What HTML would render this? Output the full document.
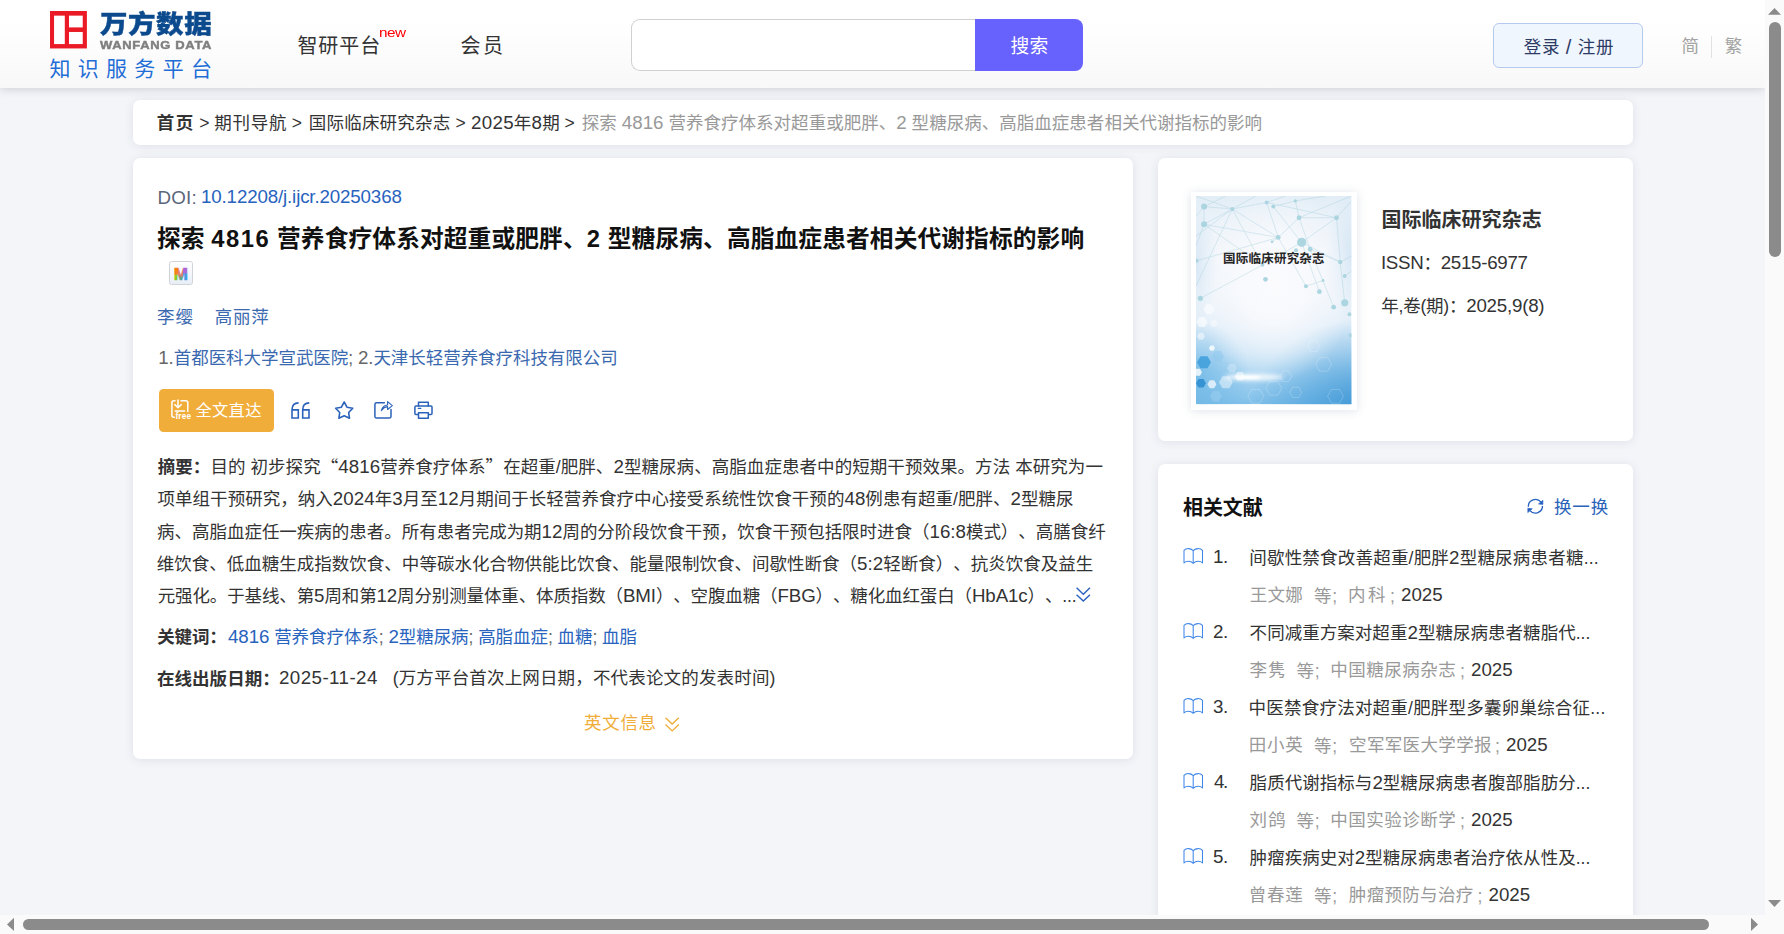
<!DOCTYPE html>
<html lang="zh-CN">
<head>
<meta charset="utf-8">
<title>探索 4816 营养食疗体系对超重或肥胖、2 型糖尿病、高脂血症患者相关代谢指标的影响 - 万方数据知识服务平台</title>
<style>
html,body{margin:0;padding:0}
body{width:1784px;height:934px;overflow:hidden;position:relative;background:#f3f5f9;font-family:"Liberation Sans","Noto Sans CJK SC",sans-serif}
.abs{position:absolute}
.t{position:absolute;white-space:nowrap;line-height:30px;height:30px}
.t b{font-weight:700}
.t{text-spacing-trim:space-all}
.q{font-family:"Noto Sans CJK SC",sans-serif}
.l{font-size:1.07em}
.card{position:absolute;background:#fff;border-radius:7px;box-shadow:0 1px 10px rgba(50,58,80,.105)}
#header{left:0;top:0;width:1765px;height:88px;background:linear-gradient(#fff,#fefefe 35%,#f8f8f8);box-shadow:0 1px 9px rgba(40,46,66,.20)}
svg{position:absolute;overflow:visible}
</style>
</head>
<body>
<div id="page" class="abs" style="left:0;top:0;width:1765px;height:915px;overflow:hidden">

<!-- cards -->
<div class="card" style="left:133px;top:100px;width:1500px;height:45px"></div>
<div class="card" style="left:133px;top:158px;width:1000px;height:601px"></div>
<div class="card" style="left:1158px;top:158px;width:475px;height:283px"></div>
<div class="card" style="left:1158px;top:464px;width:475px;height:520px"></div>

<!-- header -->
<div id="header" class="abs"></div>
<svg style="left:50.1px;top:11.3px" width="36.9" height="37.45" viewBox="0 0 36.9 37.45">
  <rect x="0" y="0" width="36.9" height="37.45" fill="#ea1b26"/>
  <rect x="4.05" y="4.64" width="10.75" height="28.44" fill="#fff"/>
  <rect x="19" y="4.64" width="13.75" height="11.76" fill="#fff"/>
  <rect x="19" y="20.98" width="13.75" height="12.1" fill="#fff"/>
</svg>
<div class="abs" style="left:631px;top:19px;width:345px;height:51.5px;box-sizing:border-box;border:1.2px solid #d0d0d0;border-right:none;border-radius:9px 0 0 9px;background:#fff"></div>
<div class="abs" style="left:975px;top:19px;width:108px;height:51.5px;border-radius:0 8px 8px 0;background:#6761fe"></div>
<div class="abs" style="left:1493px;top:23px;width:150px;height:45px;box-sizing:border-box;border:1.2px solid #b4caee;border-radius:6px;background:#f0f6fe"></div>
<div class="abs" style="left:1711px;top:36px;width:1px;height:21.5px;background:#e2e2e2"></div>

<!-- M badge -->
<div class="abs" style="left:169.2px;top:261.2px;width:23.6px;height:23.6px;box-sizing:border-box;border:1.7px solid #d0d3d8;border-radius:2.5px;background:linear-gradient(#fff,#e9eef7)"></div>
<svg style="left:169px;top:261px" width="24" height="24" viewBox="0 0 24 24">
  <defs>
    <linearGradient id="mg1" x1="0" y1="0" x2="0" y2="1"><stop offset="0" stop-color="#fa7a0a"/><stop offset=".5" stop-color="#f0801a"/><stop offset=".55" stop-color="#8ccc20"/><stop offset="1" stop-color="#86c428"/></linearGradient>
    <linearGradient id="mg2" x1="0" y1="0" x2="0" y2="1"><stop offset="0" stop-color="#ee6a50"/><stop offset=".55" stop-color="#d8786a"/><stop offset=".7" stop-color="#58a890"/><stop offset="1" stop-color="#4ea296"/></linearGradient>
    <linearGradient id="mg3" x1="0" y1="0" x2="0" y2="1"><stop offset="0" stop-color="#b45cd8"/><stop offset=".4" stop-color="#a868d8"/><stop offset=".5" stop-color="#4a94e4"/><stop offset="1" stop-color="#3aa0ea"/></linearGradient>
    <clipPath id="mc1"><rect x="0" y="0" width="9.2" height="24"/></clipPath>
    <clipPath id="mc2"><rect x="9.2" y="0" width="4.8" height="24"/></clipPath>
    <clipPath id="mc3"><rect x="14" y="0" width="10" height="24"/></clipPath>
  </defs>
  <g font-family="Liberation Sans, sans-serif" font-weight="700" font-size="17" text-anchor="middle">
    <text x="11.8" y="18.8" fill="url(#mg1)" stroke="url(#mg1)" stroke-width=".7" clip-path="url(#mc1)">M</text>
    <text x="11.8" y="18.8" fill="url(#mg2)" stroke="url(#mg2)" stroke-width=".7" clip-path="url(#mc2)">M</text>
    <text x="11.8" y="18.8" fill="url(#mg3)" stroke="url(#mg3)" stroke-width=".7" clip-path="url(#mc3)">M</text>
  </g>
</svg>

<!-- full text button -->
<div class="abs" style="left:159px;top:389px;width:115px;height:43px;border-radius:4.5px;background:#f1ad3a"></div>
<svg style="left:160px;top:392px" width="44" height="36" viewBox="160 392 44 36" fill="none" stroke="#fff" stroke-width="1.5" stroke-linecap="round" stroke-linejoin="round">
  <path d="M175,400.8 H173.9 Q171.9,400.8 171.9,402.8 V415.2 Q171.9,417.2 173.9,417.2 H174.4"/>
  <path d="M181,400.8 H185.8 Q187.8,400.8 187.8,402.8 V411.6"/>
  <path d="M178,399.9 V407.4 M174.8,404.6 L178,407.7 L181.2,404.6"/>
  <path d="M175.2,410.9 H184.6"/>
  <text x="175.4" y="419" font-family="Liberation Sans, sans-serif" font-weight="700" font-size="8.3" fill="#fff" stroke="none" letter-spacing="0.2">free</text>
</svg>

<!-- action icons -->
<svg style="left:284px;top:394px" width="160" height="32" viewBox="284 394 160 32" fill="none" stroke="#2a62ba" stroke-width="1.6" stroke-linejoin="round" stroke-linecap="round">
  <!-- quote 66 -->
  <path d="M298.6,402.9 C294,403 292,405.2 292,409.8 V418 H298.3 V409.9 H292" stroke-linecap="butt" stroke-linejoin="miter"/>
  <path d="M309.3,402.9 C304.7,403 302.7,405.2 302.7,409.8 V418 H309 V409.9 H302.7" stroke-linecap="butt" stroke-linejoin="miter"/>
  <!-- star -->
  <path d="M344.20,402.00 L346.96,407.20 L352.76,408.22 L348.67,412.45 L349.49,418.28 L344.20,415.70 L338.91,418.28 L339.73,412.45 L335.64,408.22 L341.44,407.20 Z"/>
  <!-- share -->
  <path d="M384.4,402.7 H376.6 Q374.9,402.7 374.9,404.4 V416.4 Q374.9,418.1 376.6,418.1 H389.3 Q391,418.1 391,416.4 V409.6" stroke-width="1.5"/>
  <path d="M381.3,410.6 C382.2,407.3 384.2,405.3 387.6,405 V401.6 L392.3,405.6 L387.6,409.5 V406.6 C385,406.8 383,408.2 381.3,410.6 Z" stroke-width="1.1"/>
  <!-- printer -->
  <rect x="414.9" y="406" width="17.1" height="8.6" rx="1" stroke-width="1.5"/>
  <path d="M418.5,406 V402.2 H428.3 V406" stroke-width="1.5"/>
  <rect x="418.5" y="412.8" width="9.8" height="5.4" fill="#fff" stroke-width="1.5"/>
  <path d="M418.3,408.4 H420.8" stroke-width="1.2"/>
</svg>

<!-- abstract chevrons -->
<svg style="left:1070px;top:582px" width="30" height="26" viewBox="1070 582 30 26" fill="none" stroke="#2a62c0" stroke-width="1.4">
  <path d="M1076.6,587.8 L1083.3,594.2 L1090,587.8 M1076.6,594.7 L1083.3,601.1 L1090,594.7"/>
</svg>
<!-- english info chevrons -->
<svg style="left:660px;top:708px" width="30" height="26" viewBox="660 708 30 26" fill="none" stroke="#f0ad3a" stroke-width="1.4">
  <path d="M665.5,717.7 L672.15,724 L678.8,717.7 M665.5,724.6 L672.15,730.9 L678.8,724.6"/>
</svg>

<!-- cover -->
<div class="abs" style="left:1191.3px;top:192px;width:165.4px;height:218px;background:#fff;box-shadow:0 1px 9px rgba(60,80,120,.16)"></div>
<svg style="left:1196.3px;top:196.4px" width="155.5" height="208.3" viewBox="0 0 156 208" preserveAspectRatio="none">
  <defs>
    <linearGradient id="cg" x1="0" y1="0" x2="0" y2="1">
      <stop offset="0" stop-color="#e2edf6"/><stop offset=".12" stop-color="#ebf2f9"/><stop offset=".3" stop-color="#f3f6fb"/><stop offset=".5" stop-color="#eef4fa"/><stop offset=".62" stop-color="#e2eef9"/><stop offset=".75" stop-color="#cbe4f6"/><stop offset=".88" stop-color="#a3d1f0"/><stop offset="1" stop-color="#7fbfe9"/>
    </linearGradient>
    <radialGradient id="cw" cx=".5" cy=".5" r=".5"><stop offset="0" stop-color="#fbfbfe" stop-opacity="1"/><stop offset=".4" stop-color="#f9fafd" stop-opacity=".85"/><stop offset=".7" stop-color="#f7f9fc" stop-opacity=".42"/><stop offset="1" stop-color="#f6f8fc" stop-opacity="0"/></radialGradient>
    <radialGradient id="cb" cx=".5" cy=".5" r=".5"><stop offset="0" stop-color="#3590d2" stop-opacity=".95"/><stop offset=".5" stop-color="#3b96d6" stop-opacity=".5"/><stop offset="1" stop-color="#3f9ad8" stop-opacity="0"/></radialGradient>
    <radialGradient id="cl2" cx=".5" cy=".5" r=".5"><stop offset="0" stop-color="#5aaee2" stop-opacity=".7"/><stop offset="1" stop-color="#5aaee2" stop-opacity="0"/></radialGradient>
    <radialGradient id="ce" cx=".5" cy=".5" r=".5"><stop offset="0" stop-color="#cfe3f3" stop-opacity=".8"/><stop offset="1" stop-color="#cfe3f3" stop-opacity="0"/></radialGradient>
    <filter id="bl" x="-50%" y="-200%" width="200%" height="500%"><feGaussianBlur stdDeviation="2.2"/></filter>
    <filter id="bl1" x="-50%" y="-200%" width="200%" height="500%"><feGaussianBlur stdDeviation=".9"/></filter>
    <clipPath id="cc"><rect width="156" height="208"/></clipPath>
  </defs>
  <g clip-path="url(#cc)">
  <rect width="156" height="208" fill="url(#cg)"/>
  <ellipse cx="172" cy="222" rx="120" ry="100" fill="url(#cb)"/>
  <ellipse cx="-6" cy="178" rx="60" ry="55" fill="url(#cl2)"/>
  <ellipse cx="156" cy="60" rx="26" ry="70" fill="url(#ce)"/>
  <ellipse cx="0" cy="70" rx="22" ry="60" fill="url(#ce)"/>
  <ellipse cx="78" cy="88" rx="82" ry="98" fill="url(#cw)"/>
  <g stroke="#9ccbd8" stroke-width=".7" opacity=".5" fill="none"><path d="M8.1,10.6 L36.4,13.0"/><path d="M36.4,13.0 L70.9,6.4"/><path d="M8.1,28.3 L36.4,13.0"/><path d="M8.1,10.6 L8.1,28.3"/><path d="M36.4,13.0 L82.5,41.4"/><path d="M36.4,13.0 L66.7,68.9"/><path d="M8.1,28.3 L82.5,41.4"/><path d="M77.5,10.6 L106.0,46.3"/><path d="M70.9,6.4 L82.5,41.4"/><path d="M99.7,4.9 L103.4,21.7"/><path d="M103.4,21.7 L82.5,41.4"/><path d="M103.4,21.7 L141.0,21.7"/><path d="M103.4,21.7 L114.5,53.2"/><path d="M141.0,21.7 L144.7,66.0"/><path d="M106.0,46.3 L144.7,66.0"/><path d="M82.5,41.4 L110.3,90.1"/><path d="M0.0,40.0 L36.4,13.0"/><path d="M0.7,64.7 L82.5,41.4"/><path d="M4.4,102.2 L66.7,68.9"/><path d="M66.7,68.9 L106.0,46.3"/><path d="M110.3,90.1 L127.5,84.4"/><path d="M114.5,53.2 L138.1,111.0"/><path d="M144.7,66.0 L149.2,106.6"/><path d="M70.9,6.4 L141.0,21.7"/><path d="M0.0,0.0 L36.4,13.0"/><path d="M36.4,13.0 L60.0,0.0"/><path d="M99.7,4.9 L130.0,0.0"/><path d="M141.0,21.7 L156.0,5.0"/><path d="M103.4,21.7 L156.0,0.0"/><path d="M77.5,10.6 L99.7,4.9"/><path d="M8.1,10.6 L30.0,0.0"/><path d="M0.0,20.0 L8.1,10.6"/><path d="M8.1,28.3 L0.0,50.0"/><path d="M36.4,13.0 L0.0,90.0"/><path d="M106.0,46.3 L123.8,95.5"/><path d="M141.0,21.7 L106.0,46.3"/><path d="M70.9,6.4 L90.0,0.0"/><path d="M82.5,41.4 L76.3,45.8"/><path d="M144.7,66.0 L156.0,60.0"/><path d="M149.2,80.0 L156.0,75.0"/><path d="M114.5,53.2 L144.7,66.0"/><path d="M8.1,28.3 L66.7,68.9"/></g>
  <g fill="#a8d4df" opacity=".95"><circle cx="8.1" cy="10.6" r="3.0"/><circle cx="36.4" cy="13.0" r="2.0"/><circle cx="8.1" cy="28.3" r="3.0"/><circle cx="70.9" cy="6.4" r="2.0"/><circle cx="77.5" cy="10.6" r="2.0"/><circle cx="99.7" cy="4.9" r="1.6"/><circle cx="103.4" cy="21.7" r="2.4"/><circle cx="141.0" cy="21.7" r="2.4"/><circle cx="82.5" cy="41.4" r="2.4"/><circle cx="76.3" cy="45.8" r="1.4"/><circle cx="106.0" cy="46.3" r="4.6"/><circle cx="114.5" cy="53.2" r="2.4"/><circle cx="100.4" cy="54.2" r="2.0"/><circle cx="144.7" cy="66.0" r="2.2"/><circle cx="69.7" cy="83.2" r="2.4"/><circle cx="110.3" cy="90.1" r="2.0"/><circle cx="123.8" cy="95.5" r="2.4"/><circle cx="127.5" cy="84.4" r="1.4"/><circle cx="149.2" cy="80.0" r="2.0"/><circle cx="149.2" cy="106.6" r="3.6"/><circle cx="138.1" cy="111.0" r="2.4"/><circle cx="4.4" cy="102.2" r="2.6"/><circle cx="0.7" cy="64.7" r="2.0"/><circle cx="66.7" cy="68.9" r="1.8"/><circle cx="154.0" cy="118.0" r="2.0"/><circle cx="155.0" cy="139.0" r="2.0"/></g>
  <g><polygon points="18.5,113.0 15.8,117.8 10.3,117.8 7.5,113.0 10.2,108.2 15.7,108.2" fill="#fff" opacity="0.55"/><polygon points="11.5,126.0 8.8,130.8 3.3,130.8 0.5,126.0 3.2,121.2 8.7,121.2" fill="#fff" opacity="0.6"/><polygon points="22.0,127.0 20.0,130.5 16.0,130.5 14.0,127.0 16.0,123.5 20.0,123.5" fill="#fff" opacity="0.4"/><polygon points="9.0,140.0 7.0,143.5 3.0,143.5 1.0,140.0 3.0,136.5 7.0,136.5" fill="#fff" opacity="0.5"/><polygon points="19.0,152.0 17.5,154.6 14.5,154.6 13.0,152.0 14.5,149.4 17.5,149.4" fill="#fff" opacity="0.8"/><polygon points="15.0,166.0 11.5,172.1 4.5,172.1 1.0,166.0 4.5,159.9 11.5,159.9" fill="#3d9edc" opacity="0.85"/><polygon points="28.0,160.0 25.0,165.2 19.0,165.2 16.0,160.0 19.0,154.8 25.0,154.8" fill="#8ec8ee" opacity="0.5"/><polygon points="10.0,187.0 7.5,191.3 2.5,191.3 0.0,187.0 2.5,182.7 7.5,182.7" fill="#2d8ed2" opacity="0.9"/><polygon points="20.5,188.0 18.2,191.9 13.8,191.9 11.5,188.0 13.7,184.1 18.2,184.1" fill="#fff" opacity="0.7"/><polygon points="37.0,186.0 33.5,192.1 26.5,192.1 23.0,186.0 26.5,179.9 33.5,179.9" fill="#fff" opacity="0.45"/><polygon points="6.0,176.0 4.0,179.5 0.0,179.5 -2.0,176.0 -0.0,172.5 4.0,172.5" fill="#fff" opacity="0.8"/><polygon points="49.0,180.0 46.5,184.3 41.5,184.3 39.0,180.0 41.5,175.7 46.5,175.7" fill="#fff" opacity="0.5"/><polygon points="26.0,200.0 23.0,205.2 17.0,205.2 14.0,200.0 17.0,194.8 23.0,194.8" fill="#9fd0f0" opacity="0.5"/><polygon points="41.0,172.0 38.5,176.3 33.5,176.3 31.0,172.0 33.5,167.7 38.5,167.7" fill="#fff" opacity="0.25"/><polygon points="86.0,192.0 82.0,198.9 74.0,198.9 70.0,192.0 74.0,185.1 82.0,185.1" fill="none" stroke="#fff" stroke-width=".6" opacity=".35"/><polygon points="96.0,180.0 93.0,185.2 87.0,185.2 84.0,180.0 87.0,174.8 93.0,174.8" fill="none" stroke="#fff" stroke-width=".6" opacity=".35"/><polygon points="136.0,168.0 132.0,174.9 124.0,174.9 120.0,168.0 124.0,161.1 132.0,161.1" fill="none" stroke="#fff" stroke-width=".6" opacity=".35"/><polygon points="148.0,200.0 144.0,206.9 136.0,206.9 132.0,200.0 136.0,193.1 144.0,193.1" fill="none" stroke="#fff" stroke-width=".6" opacity=".35"/><polygon points="68.0,200.0 64.0,206.9 56.0,206.9 52.0,200.0 56.0,193.1 64.0,193.1" fill="none" stroke="#fff" stroke-width=".6" opacity=".35"/><polygon points="124.0,150.0 121.0,155.2 115.0,155.2 112.0,150.0 115.0,144.8 121.0,144.8" fill="none" stroke="#fff" stroke-width=".6" opacity=".35"/><polygon points="106.0,196.0 103.0,201.2 97.0,201.2 94.0,196.0 97.0,190.8 103.0,190.8" fill="none" stroke="#fff" stroke-width=".6" opacity=".35"/></g>
  <ellipse cx="58" cy="181" rx="30" ry="3.4" fill="#fff" opacity=".8" filter="url(#bl)"/>
  <ellipse cx="52" cy="181" rx="13" ry="1.8" fill="#fff" filter="url(#bl1)"/>
  </g>
</svg>

<!-- related: book icons -->
<svg style="left:1180px;top:544px" width="28" height="24" viewBox="1180 544 28 24" fill="none" stroke="#3f86ea" stroke-width="1.05" stroke-linejoin="round">
  <path d="M1184,562.9 V550.4 C1186.2,548 1190.6,547.9 1193.2,550.7 C1195.9,547.9 1200.3,548 1202.5,550.4 V562.9 C1200,560.7 1196,560.8 1193.2,563.3 C1190.5,560.8 1186.5,560.7 1184,562.9 Z M1193.2,550.7 V563.3"/>
</svg>
<svg style="left:1180px;top:619px" width="28" height="24" viewBox="1180 544 28 24" fill="none" stroke="#3f86ea" stroke-width="1.05" stroke-linejoin="round">
  <path d="M1184,562.9 V550.4 C1186.2,548 1190.6,547.9 1193.2,550.7 C1195.9,547.9 1200.3,548 1202.5,550.4 V562.9 C1200,560.7 1196,560.8 1193.2,563.3 C1190.5,560.8 1186.5,560.7 1184,562.9 Z M1193.2,550.7 V563.3"/>
</svg>
<svg style="left:1180px;top:694px" width="28" height="24" viewBox="1180 544 28 24" fill="none" stroke="#3f86ea" stroke-width="1.05" stroke-linejoin="round">
  <path d="M1184,562.9 V550.4 C1186.2,548 1190.6,547.9 1193.2,550.7 C1195.9,547.9 1200.3,548 1202.5,550.4 V562.9 C1200,560.7 1196,560.8 1193.2,563.3 C1190.5,560.8 1186.5,560.7 1184,562.9 Z M1193.2,550.7 V563.3"/>
</svg>
<svg style="left:1180px;top:769px" width="28" height="24" viewBox="1180 544 28 24" fill="none" stroke="#3f86ea" stroke-width="1.05" stroke-linejoin="round">
  <path d="M1184,562.9 V550.4 C1186.2,548 1190.6,547.9 1193.2,550.7 C1195.9,547.9 1200.3,548 1202.5,550.4 V562.9 C1200,560.7 1196,560.8 1193.2,563.3 C1190.5,560.8 1186.5,560.7 1184,562.9 Z M1193.2,550.7 V563.3"/>
</svg>
<svg style="left:1180px;top:844px" width="28" height="24" viewBox="1180 544 28 24" fill="none" stroke="#3f86ea" stroke-width="1.05" stroke-linejoin="round">
  <path d="M1184,562.9 V550.4 C1186.2,548 1190.6,547.9 1193.2,550.7 C1195.9,547.9 1200.3,548 1202.5,550.4 V562.9 C1200,560.7 1196,560.8 1193.2,563.3 C1190.5,560.8 1186.5,560.7 1184,562.9 Z M1193.2,550.7 V563.3"/>
</svg>
<!-- refresh -->
<svg style="left:1524px;top:496px" width="24" height="22" viewBox="1524 496 24 22" fill="none" stroke="#2560c0" stroke-width="1.3">
  <path d="M1528.3,506.8 A7.1,7.1 0 0 1 1541,502.2"/>
  <path d="M1542.5,505.9 A7.1,7.1 0 0 1 1530,510.6"/>
  <path d="M1542.9,500.2 L1542.9,504.4 L1538.5,504 Z" fill="#2560c0" stroke-width=".6"/>
  <path d="M1527.8,512.6 L1527.8,508.3 L1532.3,508.7 Z" fill="#2560c0" stroke-width=".6"/>
</svg>

<header>
<div class="t" style="left:99.75px;top:8.9px;color:#0c4a8e;font-size:25px;font-weight:900;letter-spacing:0.500px;-webkit-text-stroke:0.4px #0c4a8e;transform:scaleX(1.1);transform-origin:0 50%;">万方数据</div>
<div class="t" style="left:99.75px;top:29.9px;color:#7f7f7f;font-size:11.6px;font-weight:700;letter-spacing:0.591px;-webkit-text-stroke:0.45px #7f7f7f;transform:scaleX(1.12);transform-origin:0 50%;">WANFANG DATA</div>
<div class="t" style="left:49.4px;top:53.6px;color:#1f6dd6;font-size:21px;font-weight:400;letter-spacing:7.320px;">知识服务平台</div>
<div class="t" style="left:297.45px;top:30.7px;color:#333;font-size:20px;font-weight:400;letter-spacing:0.900px;">智研平台</div>
<div class="t" style="left:379.4px;top:18.0px;color:#ff0000;font-size:13.3px;font-weight:400;letter-spacing:-0.400px;transform:scaleX(1.15);transform-origin:0 50%;">new</div>
<div class="t" style="left:460.6px;top:30.7px;color:#333;font-size:20px;font-weight:400;letter-spacing:2.400px;">会员</div>
<div class="t" style="left:1010.4px;top:32.4px;color:#fff;font-size:18.75px;font-weight:400;letter-spacing:0.400px;">搜索</div>
<div class="t" style="left:1523.7px;top:32.1px;color:#2c3a66;font-size:17.5px;font-weight:400;letter-spacing:0.767px;">登录 <span style="font-size:20px;line-height:20px;position:relative;top:1px">/</span> 注册</div>
<div class="t" style="left:1681.45px;top:31.0px;color:#a3a3a3;font-size:17.5px;font-weight:400;letter-spacing:0.000px;">简</div>
<div class="t" style="left:1724.7px;top:31.0px;color:#a3a3a3;font-size:17.5px;font-weight:400;letter-spacing:0.000px;">繁</div>
</header>
<nav>
<div class="t" style="left:156.75px;top:107.6px;color:#333;font-size:17.5px;font-weight:700;letter-spacing:1.500px;">首页</div>
<div class="t" style="left:199.25px;top:108.1px;color:#333;font-size:17.5px;font-weight:400;letter-spacing:0.000px;">&gt;</div>
<div class="t" style="left:214.35px;top:107.6px;color:#333;font-size:17.5px;font-weight:400;letter-spacing:0.700px;">期刊导航</div>
<div class="t" style="left:291.75px;top:108.1px;color:#333;font-size:17.5px;font-weight:400;letter-spacing:0.000px;">&gt;</div>
<div class="t" style="left:308.75px;top:107.6px;color:#333;font-size:17.5px;font-weight:400;letter-spacing:0.214px;">国际临床研究杂志</div>
<div class="t" style="left:455.5px;top:108.1px;color:#333;font-size:17.5px;font-weight:400;letter-spacing:0.000px;">&gt;</div>
<div class="t" style="left:471.1px;top:107.6px;color:#333;font-size:17.5px;font-weight:400;letter-spacing:0.267px;"><span class="l">2025</span>年<span class="l">8</span>期</div>
<div class="t" style="left:564.5px;top:108.1px;color:#333;font-size:17.5px;font-weight:400;letter-spacing:0.000px;">&gt;</div>
<div class="t" style="left:581.85px;top:107.6px;color:#999;font-size:17.5px;font-weight:400;letter-spacing:0.026px;">探索 <span class="l">4816</span> 营养食疗体系对超重或肥胖、<span class="l">2</span> 型糖尿病、高脂血症患者相关代谢指标的影响</div>
</nav>
<main>
<div class="t" style="left:157.38px;top:182.55px;color:#5b6579;font-size:18.75px;font-weight:400;letter-spacing:0.250px;">DOI:</div>
<div class="t" style="left:201.0px;top:182.1px;color:#2863be;font-size:18.75px;font-weight:400;letter-spacing:-0.152px;">10.12208/j.ijcr.20250368</div>
<div class="t" style="left:157.0px;top:223.5px;color:#111;font-size:23.75px;font-weight:700;letter-spacing:0.071px;">探索 <span style="letter-spacing:1.55px">4816</span> 营养食疗体系对超重或肥胖、<span style="letter-spacing:1.2px">2</span> 型糖尿病、高脂血症患者相关代谢指标的影响</div>
<div class="t" style="left:157.0px;top:302.25px;color:#3a69b0;font-size:17.5px;font-weight:400;letter-spacing:1.000px;">李缨</div>
<div class="t" style="left:214.75px;top:302.25px;color:#3a69b0;font-size:17.5px;font-weight:400;letter-spacing:0.750px;">高丽萍</div>
<div class="t" style="left:158.25px;top:343.25px;color:#3a69b0;font-size:17.5px;font-weight:400;letter-spacing:-0.052px;"><span style="color:#666"><span class="l">1.</span></span>首都医科大学宣武医院<span style="color:#666">; <span class="l">2.</span></span>天津长轻营养食疗科技有限公司</div>
<div class="t" style="left:195.42px;top:395.25px;color:#fff;font-size:16.25px;font-weight:400;letter-spacing:0.350px;">全文直达</div>
<div class="t" style="left:157.75px;top:450.75px;color:#333;font-size:17.5px;font-weight:400;letter-spacing:0.061px;"><b>摘要：</b>目的 初步探究<span class="q">“</span><span class="l">4816</span>营养食疗体系<span class="q">”</span>在超重/肥胖、<span class="l">2</span>型糖尿病、高脂血症患者中的短期干预效果。方法 本研究为一</div>
<div class="t" style="left:157.5px;top:483.75px;color:#333;font-size:17.5px;font-weight:400;letter-spacing:0.036px;">项单组干预研究，纳入<span class="l">2024</span>年<span class="l">3</span>月至<span class="l">12</span>月期间于长轻营养食疗中心接受系统性饮食干预的<span class="l">48</span>例患有超重/肥胖、<span class="l">2</span>型糖尿</div>
<div class="t" style="left:157.0px;top:516.5px;color:#333;font-size:17.5px;font-weight:400;letter-spacing:-0.018px;">病、高脂血症任一疾病的患者。所有患者完成为期<span class="l">12</span>周的分阶段饮食干预，饮食干预包括限时进食（<span class="l">16:8</span>模式）、高膳食纤</div>
<div class="t" style="left:156.75px;top:548.75px;color:#333;font-size:17.5px;font-weight:400;letter-spacing:0.009px;">维饮食、低血糖生成指数饮食、中等碳水化合物供能比饮食、能量限制饮食、间歇性断食（<span class="l">5:2</span>轻断食）、抗炎饮食及益生</div>
<div class="t" style="left:157.75px;top:581.25px;color:#333;font-size:17.5px;font-weight:400;letter-spacing:-0.127px;">元强化。于基线、第<span class="l">5</span>周和第<span class="l">12</span>周分别测量体重、体质指数（<span class="l">BMI</span>）、空腹血糖（<span class="l">FBG</span>）、糖化血红蛋白（<span class="l">HbA1c</span>）、...</div>
<div class="t" style="left:157.25px;top:621.75px;color:#333;font-size:17.5px;font-weight:400;letter-spacing:-0.167px;"><b>关键词：</b></div>
<div class="t" style="left:228.0px;top:621.75px;color:#2863be;font-size:17.5px;font-weight:400;letter-spacing:-0.065px;"><span class="l">4816</span> 营养食疗体系<span style="color:#666">;</span> <span class="l">2</span>型糖尿病<span style="color:#666">;</span> 高脂血症<span style="color:#666">;</span> 血糖<span style="color:#666">;</span> 血脂</div>
<div class="t" style="left:156.9px;top:664.25px;color:#333;font-size:17.5px;font-weight:400;letter-spacing:0.067px;"><b>在线出版日期：</b></div>
<div class="t" style="left:279.0px;top:663.25px;color:#333;font-size:17.5px;font-weight:400;letter-spacing:0.444px;"><span class="l">2025-11-24</span></div>
<div class="t" style="left:392.68px;top:663.25px;color:#333;font-size:17.5px;font-weight:400;letter-spacing:0.161px;">(万方平台首次上网日期，不代表论文的发表时间)</div>
<div class="t" style="left:584.1px;top:707.6px;color:#f0ad3a;font-size:17.5px;font-weight:400;letter-spacing:0.667px;">英文信息</div>
</main>
<aside>
<div class="t" style="left:1223.0px;top:244.0px;color:#262626;font-size:12.5px;font-weight:700;letter-spacing:0.229px;">国际临床研究杂志</div>
<div class="t" style="left:1381.55px;top:205.0px;color:#333;font-size:20px;font-weight:700;letter-spacing:0.014px;">国际临床研究杂志</div>
<div class="t" style="left:1380.9px;top:248.0px;color:#333;font-size:17.5px;font-weight:400;letter-spacing:-0.277px;"><span class="l">ISSN</span>：<span class="l">2515-6977</span></div>
<div class="t" style="left:1381.25px;top:290.5px;color:#333;font-size:17.5px;font-weight:400;letter-spacing:-0.220px;">年,卷(期)：<span class="l">2025,9(8)</span></div>
<div class="t" style="left:1182.95px;top:493.3px;color:#111;font-size:20px;font-weight:700;letter-spacing:-0.033px;">相关文献</div>
<div class="t" style="left:1553.95px;top:492.3px;color:#2962b8;font-size:17.5px;font-weight:400;letter-spacing:0.850px;">换一换</div>
<div class="t" style="left:1213.05px;top:542.4px;color:#333;font-size:18.75px;font-weight:400;letter-spacing:-0.500px;">1.</div>
<div class="t" style="left:1249.25px;top:543.0px;color:#333;font-size:17.5px;font-weight:400;letter-spacing:0.205px;">间歇性禁食改善超重/肥胖<span class="l">2</span>型糖尿病患者糖...</div>
<div class="t" style="left:1249.75px;top:580.0px;color:#999;font-size:17.5px;font-weight:400;letter-spacing:0.250px;">王文娜</div>
<div class="t" style="left:1314.1px;top:580.5px;color:#999;font-size:17.5px;font-weight:400;letter-spacing:0.600px;">等;</div>
<div class="t" style="left:1348.1px;top:580.0px;color:#999;font-size:17.5px;font-weight:400;letter-spacing:2.400px;">内科</div>
<div class="t" style="left:1390.1px;top:580.5px;color:#999;font-size:17.5px;font-weight:400;letter-spacing:0.000px;">;</div>
<div class="t" style="left:1401.0px;top:580.0px;color:#333;font-size:17.5px;font-weight:400;letter-spacing:0.000px;"><span class="l">2025</span></div>
<div class="t" style="left:1213.05px;top:617.4px;color:#333;font-size:18.75px;font-weight:400;letter-spacing:-0.500px;">2.</div>
<div class="t" style="left:1249.62px;top:618.0px;color:#333;font-size:17.5px;font-weight:400;letter-spacing:0.036px;">不同减重方案对超重<span class="l">2</span>型糖尿病患者糖脂代...</div>
<div class="t" style="left:1249.5px;top:655.0px;color:#999;font-size:17.5px;font-weight:400;letter-spacing:1.000px;">李隽</div>
<div class="t" style="left:1296.6px;top:655.5px;color:#999;font-size:17.5px;font-weight:400;letter-spacing:0.600px;">等;</div>
<div class="t" style="left:1330.35px;top:655.0px;color:#999;font-size:17.5px;font-weight:400;letter-spacing:0.483px;">中国糖尿病杂志</div>
<div class="t" style="left:1460.1px;top:655.5px;color:#999;font-size:17.5px;font-weight:400;letter-spacing:0.000px;">;</div>
<div class="t" style="left:1471.0px;top:655.0px;color:#333;font-size:17.5px;font-weight:400;letter-spacing:0.000px;"><span class="l">2025</span></div>
<div class="t" style="left:1213.05px;top:692.4px;color:#333;font-size:18.75px;font-weight:400;letter-spacing:-0.500px;">3.</div>
<div class="t" style="left:1248.62px;top:693.0px;color:#333;font-size:17.5px;font-weight:400;letter-spacing:0.216px;">中医禁食疗法对超重/肥胖型多囊卵巢综合征...</div>
<div class="t" style="left:1248.75px;top:730.0px;color:#999;font-size:17.5px;font-weight:400;letter-spacing:0.750px;">田小英</div>
<div class="t" style="left:1314.1px;top:730.5px;color:#999;font-size:17.5px;font-weight:400;letter-spacing:0.600px;">等;</div>
<div class="t" style="left:1349.1px;top:730.0px;color:#999;font-size:17.5px;font-weight:400;letter-spacing:0.343px;">空军军医大学学报</div>
<div class="t" style="left:1495.1px;top:730.5px;color:#999;font-size:17.5px;font-weight:400;letter-spacing:0.000px;">;</div>
<div class="t" style="left:1506.0px;top:730.0px;color:#333;font-size:17.5px;font-weight:400;letter-spacing:0.000px;"><span class="l">2025</span></div>
<div class="t" style="left:1214.05px;top:767.4px;color:#333;font-size:18.75px;font-weight:400;letter-spacing:-1.500px;">4.</div>
<div class="t" style="left:1249.62px;top:768.0px;color:#333;font-size:17.5px;font-weight:400;letter-spacing:0.036px;">脂质代谢指标与<span class="l">2</span>型糖尿病患者腹部脂肪分...</div>
<div class="t" style="left:1249.5px;top:805.0px;color:#999;font-size:17.5px;font-weight:400;letter-spacing:1.000px;">刘鸽</div>
<div class="t" style="left:1296.6px;top:805.5px;color:#999;font-size:17.5px;font-weight:400;letter-spacing:0.600px;">等;</div>
<div class="t" style="left:1330.35px;top:805.0px;color:#999;font-size:17.5px;font-weight:400;letter-spacing:0.483px;">中国实验诊断学</div>
<div class="t" style="left:1460.1px;top:805.5px;color:#999;font-size:17.5px;font-weight:400;letter-spacing:0.000px;">;</div>
<div class="t" style="left:1471.0px;top:805.0px;color:#333;font-size:17.5px;font-weight:400;letter-spacing:0.000px;"><span class="l">2025</span></div>
<div class="t" style="left:1213.05px;top:842.4px;color:#333;font-size:18.75px;font-weight:400;letter-spacing:-0.500px;">5.</div>
<div class="t" style="left:1249.62px;top:843.0px;color:#333;font-size:17.5px;font-weight:400;letter-spacing:0.036px;">肿瘤疾病史对<span class="l">2</span>型糖尿病患者治疗依从性及...</div>
<div class="t" style="left:1248.75px;top:880.0px;color:#999;font-size:17.5px;font-weight:400;letter-spacing:0.750px;">曾春莲</div>
<div class="t" style="left:1314.1px;top:880.5px;color:#999;font-size:17.5px;font-weight:400;letter-spacing:0.600px;">等;</div>
<div class="t" style="left:1348.85px;top:880.0px;color:#999;font-size:17.5px;font-weight:400;letter-spacing:0.317px;">肿瘤预防与治疗</div>
<div class="t" style="left:1477.6px;top:880.5px;color:#999;font-size:17.5px;font-weight:400;letter-spacing:0.000px;">;</div>
<div class="t" style="left:1488.5px;top:880.0px;color:#333;font-size:17.5px;font-weight:400;letter-spacing:0.000px;"><span class="l">2025</span></div>
</aside>
</div>

<!-- scrollbars -->
<div class="abs" style="left:1765px;top:0;width:19px;height:934px;background:#fafafa"></div>
<div class="abs" style="left:0;top:915px;width:1784px;height:19px;background:#fafafa"></div>
<div class="abs" style="left:1769px;top:22px;width:11.5px;height:235px;border-radius:6px;background:#8b8b8b"></div>
<div class="abs" style="left:23px;top:919px;width:1686px;height:11px;border-radius:6px;background:#8b8b8b"></div>
<svg style="left:0;top:0" width="1784" height="934" viewBox="0 0 1784 934" fill="#8b8b8b" pointer-events="none">
  <path d="M1768,14.8 L1774.5,8 L1781,14.8 Z"/>
  <path d="M1768,900 L1781,900 L1774.5,907 Z"/>
  <path d="M14,917.8 L14,931 L7,924.4 Z"/>
  <path d="M1751,917.8 L1751,931 L1758,924.4 Z"/>
</svg>
</body>
</html>
